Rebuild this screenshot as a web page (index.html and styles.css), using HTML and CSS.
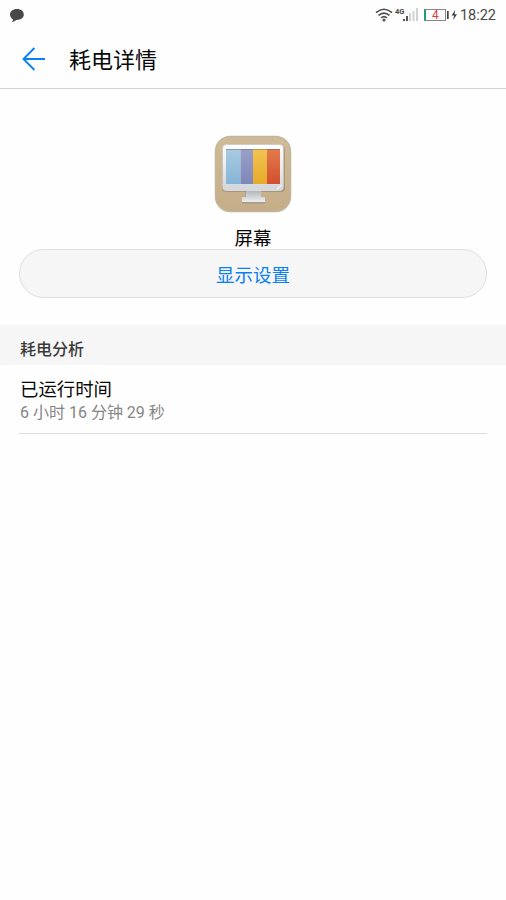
FILE: index.html
```html
<!DOCTYPE html>
<html lang="zh-CN">
<head>
<meta charset="utf-8">
<title>耗电详情</title>
<link rel="stylesheet" href="styles.css">
</head>
<body>
<header class="status">
  <svg class="chat" width="16" height="16" viewBox="0 0 16 16"><path d="M8 1C3.800 1 1 3.400 1 6.600c0 2.200 1.200 3.800 3 4.800 0 1-.5 1.700-1.200 2.500 2 0 3.300-.8 4.300-1.900 4.400.3 7.700-2 7.700-5.400C14.800 3.400 12.200 1 8 1z" fill="#484848"/></svg>
  <div class="signals">
    <svg class="wifi" width="18" height="14" viewBox="0 0 18 14" fill="none" stroke="#4b4b4b" stroke-width="1.6"><path d="M1 4.700Q9-2.200 17 4.700M3.500 7.400Q9 2.700 14.500 7.400M6 10Q9 7.400 12 10"/><circle cx="9" cy="12" r="1.500" fill="#4b4b4b" stroke="none"/></svg>
    <span class="network">4G</span>
    <svg class="bars" width="15" height="13" viewBox="0 0 15 13"><path d="M0 11h2v2H0zM3 8h2v5H3z" fill="#555"/><path d="M6 5h2v8H6zM9.500 3h2v10h-2zM13 0h2v13h-2z" fill="#d2d2d2"/></svg>
    <span class="battery"><span class="level">4</span></span>
    <svg class="bolt" width="11" height="12" viewBox="0 0 11 12" fill="#444"><path d="M0 2h1.700v8H0zM8.200 1 4.500 6.500H7L6.200 11 10 5.300H7.600z"/></svg>
    <time class="clock">18:22</time>
  </div>
</header>
<nav class="titlebar">
  <svg class="back" width="24" height="24" viewBox="0 0 24 24" fill="none" stroke="#0a80f5" stroke-width="1.900"><path d="M12.400 1 1.500 12l10.900 11M1.500 12H23"/></svg>
  <h1>耗电详情</h1>
</nav>
<main>
  <section class="app">
    <svg class="app-icon" width="78" height="78" viewBox="0 0 78 78">
      <defs>
        <linearGradient id="tan" x2="0" y2="1"><stop stop-color="#d0bb98"/><stop offset="1" stop-color="#c4ad87"/></linearGradient>
        <linearGradient id="frame" x2="0" y2="1"><stop stop-color="#fff"/><stop offset="1" stop-color="#d2d5da"/></linearGradient>
        <linearGradient id="stand" x2="0" y2="1"><stop stop-color="#aeb2b8"/><stop offset="1" stop-color="#eceef0"/></linearGradient>
        <linearGradient id="blue" x2="0" y2="1"><stop stop-color="#a9cbe0"/><stop offset="1" stop-color="#86b4d6"/></linearGradient>
        <linearGradient id="violet" x2="0" y2="1"><stop stop-color="#999fc8"/><stop offset="1" stop-color="#7d87b8"/></linearGradient>
        <linearGradient id="yellow" x2="0" y2="1"><stop stop-color="#f0c351"/><stop offset="1" stop-color="#e6ab2b"/></linearGradient>
        <linearGradient id="red" x2="0" y2="1"><stop stop-color="#e37a4b"/><stop offset="1" stop-color="#d2502f"/></linearGradient>
      </defs>
      <rect x="1.500" y="1.500" width="75" height="75" rx="15" fill="url(#tan)" stroke="#c3b69f" stroke-width="1.500"/>
      <rect x="8" y="11" width="63" height="46" rx="4" fill="#8f7a59" opacity=".5"/>
      <path d="M31 55h16v7.500h3V68H28v-5.500h3z" fill="#8f7a59" opacity=".3"/>
      <path d="M32 55h15v7h4v5H28v-5h4z" fill="url(#stand)"/>
      <path d="M28 67h23v1.500H28z" fill="#a39a8b"/>
      <rect x="8.500" y="9.500" width="61" height="46" rx="4" fill="url(#frame)" stroke="#c7c6c2" stroke-width=".7"/>
      <path d="M9 50h60v2q0 4-4 4H13q-4 0-4-4z" fill="#d5d8dc"/>
      <rect x="12" y="14" width="14.500" height="35" fill="url(#blue)"/>
      <rect x="26.500" y="14" width="12.500" height="35" fill="url(#violet)"/>
      <rect x="39" y="14" width="14" height="35" fill="url(#yellow)"/>
      <rect x="53" y="14" width="13" height="35" fill="url(#red)"/>
      <path d="M12 14.500h54" stroke="#625f6c" stroke-opacity=".45"/>
      <path d="m63 54 5-4" stroke="#fff"/>
    </svg>
    <h2>屏幕</h2>
    <button class="settings" type="button">显示设置</button>
  </section>
  <h3 class="section-title">耗电分析</h3>
  <section class="runtime">
    <div class="label">已运行时间</div>
    <div class="value">6 小时 16 分钟 29 秒</div>
  </section>
</main>
</body>
</html>
```
FILE: styles.css
```css
* { box-sizing: border-box; }
body {
  margin: 0;
  min-height: 900px;
  background: #fefefe;
  color: #080808;
  font-family: Roboto, "Noto Sans CJK SC", sans-serif;
}
h1, h2, h3 { margin: 0; font-weight: 400; }
svg { display: block; flex: none; }
.status {
  height: 31px;
  display: flex;
  justify-content: space-between;
  align-items: flex-start;
  padding: 8px 10px 0 9px;
}
.signals { display: flex; align-items: flex-start; height: 16px; }
.network {
  width: 10px;
  margin-left: 2px;
  font: 700 7.5px/8px "Roboto", sans-serif;
  color: #4b4b4b;
}
.bars { margin: 0 6px 0 -2px; }
.battery {
  width: 22px;
  height: 12px;
  margin-top: 1px;
  border: 1px solid #888;
  border-left: 2px solid #239e68;
  color: #e5393d;
  text-align: center;
}
.level { display: block; font-size: 12px; line-height: 11px; }
.bolt { margin: 1px 2px 0 1px; }
.clock { font-size: 14.5px; line-height: 16px; color: #484848; }
.titlebar {
  height: 58px;
  display: flex;
  align-items: center;
  gap: 23px;
  padding-left: 22px;
  border-bottom: 1px solid #d1d1d1;
}
.back { margin-bottom: 2px; }
.titlebar h1 { padding-top: 2px; font-size: 22px; line-height: 32px; }
.app {
  height: 236px;
  display: flex;
  flex-direction: column;
  align-items: center;
  padding: 46px 19px 0;
}
.app h2 { height: 36px; padding-top: 14px; font-size: 18.5px; line-height: 25px; }
.settings {
  width: 468px;
  height: 49px;
  flex: none;
  padding: 0;
  border: 1px solid #dedede;
  border-radius: 25px;
  background: #f6f6f6;
  color: #0a80f5;
  font: inherit;
  font-size: 18.5px;
}
.section-title {
  height: 40px;
  padding: 9px 20px 0;
  background: #f6f6f6;
  color: #3a3a3a;
  font-size: 16px;
  line-height: 32px;
  font-weight: 500;
}
.runtime {
  height: 69px;
  margin: 0 19px;
  padding: 13px 0 0 1px;
  border-bottom: 1px solid #dedede;
}
.label { font-size: 18.4px; line-height: 24px; }
.value { font-size: 16px; line-height: 22px; color: #858585; }
```
